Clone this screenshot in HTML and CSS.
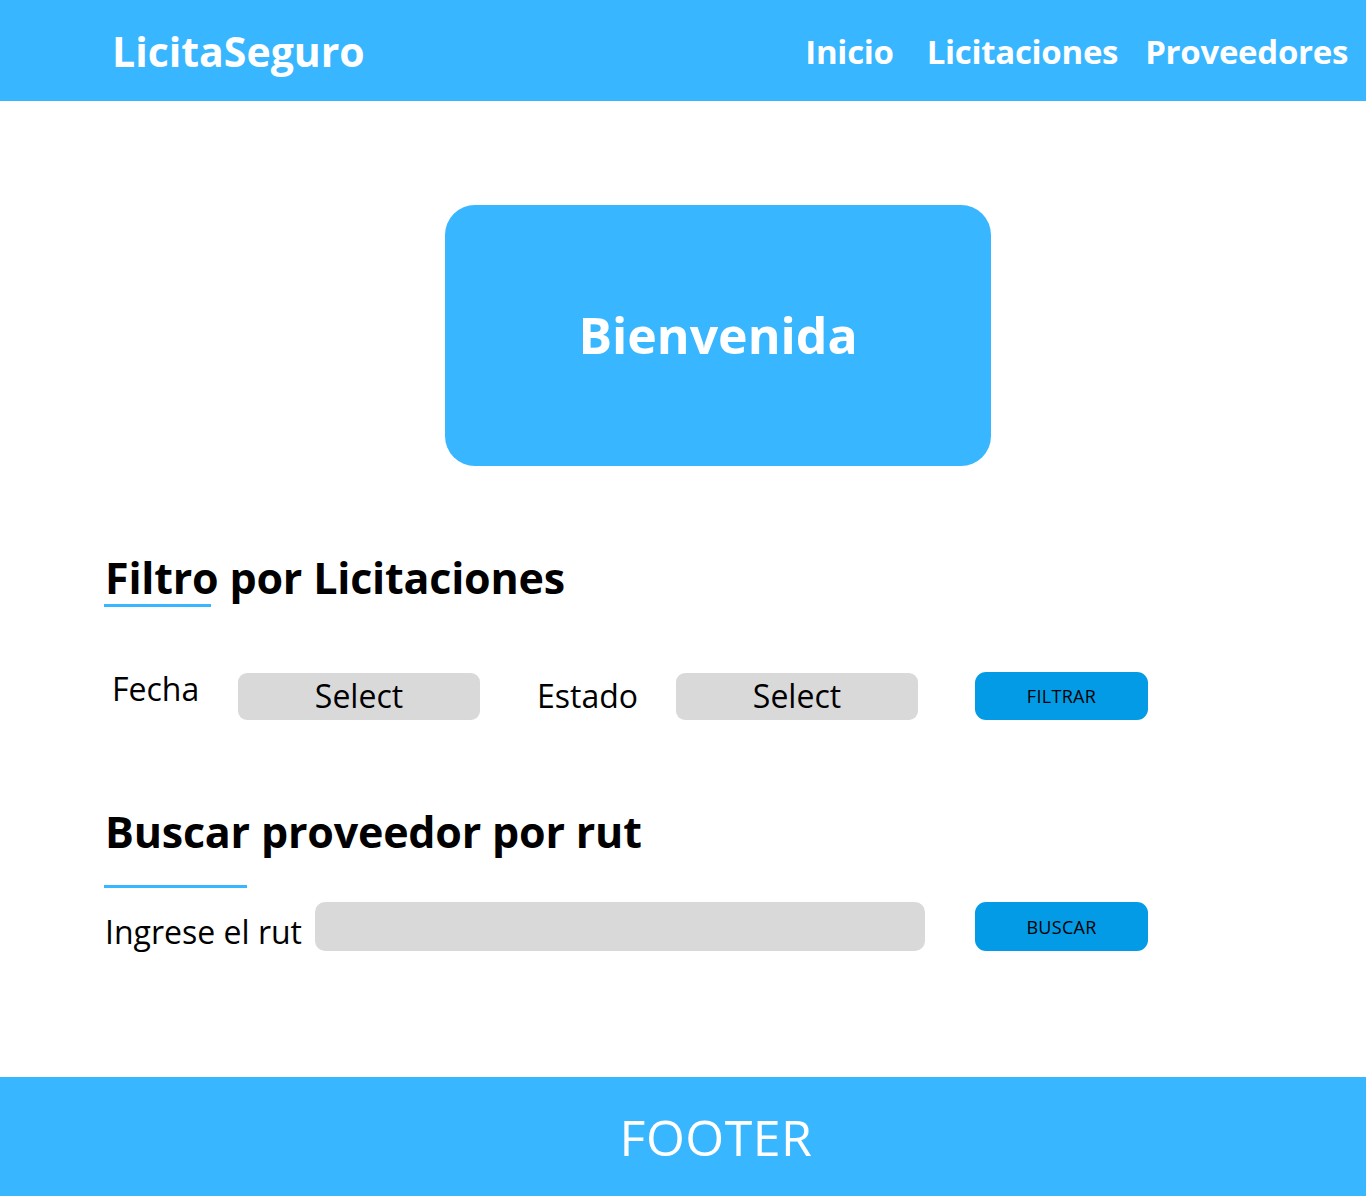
FILE: index.html
```html
<!DOCTYPE html>
<html lang="es">
<head>
<meta charset="utf-8">
<title>LicitaSeguro</title>
<link rel="stylesheet" href="styles.css">
</head>
<body>
<header class="topbar">
  <div class="logo">LicitaSeguro</div>
  <nav class="nav">
    <a class="nav-link first" href="#">Inicio</a>
    <a class="nav-link" href="#">Licitaciones</a>
    <a class="nav-link" href="#">Proveedores</a>
  </nav>
</header>
<main class="main">
  <div class="hero-wrap">
    <div class="hero">Bienvenida</div>
  </div>
  <section class="section filter">
    <h2 class="title">Filtro por Licitaciones</h2>
    <div class="underline u1"></div>
    <div class="filter-row">
      <span class="label fecha">Fecha</span>
      <div class="select">Select</div>
      <span class="label estado">Estado</span>
      <div class="select">Select</div>
      <button class="btn btn-filter">FILTRAR</button>
    </div>
  </section>
  <section class="section search">
    <h2 class="title">Buscar proveedor por rut</h2>
    <div class="underline u2"></div>
    <div class="search-row">
      <span class="label rut">Ingrese el rut</span>
      <div class="input"></div>
      <button class="btn btn-search">BUSCAR</button>
    </div>
  </section>
</main>
<footer class="footer">FOOTER</footer>
</body>
</html>
```
FILE: styles.css
```css
* { box-sizing: border-box; }
html, body { margin: 0; padding: 0; }
body {
  font-family: "Open Sans", "Noto Sans", sans-serif;
  background: #ffffff;
  color: #000;
  width: 1366px;
  height: 1196px;
  display: flex;
  flex-direction: column;
}
.topbar {
  height: 101px;
  flex: none;
  background: #38b6ff;
  display: flex;
  align-items: center;
  justify-content: space-between;
  padding: 0 18px 0 112px;
  color: #fff;
}
.logo {
  font-size: 41px;
  font-weight: 700;
  line-height: 1;
  margin-top: 1px;
}
.nav { display: flex; gap: 27px; margin-top: 1px; }
.nav-link {
  color: #fff;
  text-decoration: none;
  font-size: 33px;
  font-weight: 700;
  letter-spacing: -0.3px;
  line-height: 1;
}
.nav-link.first { margin-right: 6px; }
.main { flex: 1; }
.hero-wrap { display: flex; padding-top: 104px; padding-left: 445px; }
.hero {
  width: 546px;
  height: 261px;
  background: #38b6ff;
  border-radius: 30px;
  display: flex;
  align-items: center;
  justify-content: center;
  color: #fff;
  font-size: 50px;
  font-weight: 700;
  padding-bottom: 2px;
}
.section { padding-left: 105px; }
.title {
  margin: 0;
  font-size: 43px;
  font-weight: 700;
  line-height: 1;
  letter-spacing: -0.2px;
}
.filter { margin-top: 90px; }
.underline { height: 3px; background: #38b6ff; margin-left: -1px; }
.u1 { width: 107px; margin-top: 5px; }
.u2 { width: 143px; margin-top: 32px; }
.filter-row {
  display: flex;
  align-items: center;
  margin-top: 65px;
  height: 48px;
}
.label { font-size: 32px; line-height: 1; }
.fecha { margin-left: 7px; width: 126px; margin-top: -14px; }
.estado { margin-left: 57px; width: 139px; }
.select {
  width: 242px;
  height: 47px;
  background: #d9d9d9;
  border-radius: 9px;
  display: flex;
  align-items: center;
  justify-content: center;
  font-size: 32px;
  line-height: 1;
}
.btn {
  width: 173px;
  height: 48px;
  background: #039be5;
  border: none;
  border-radius: 11px;
  color: #000;
  font-family: inherit;
  font-size: 18px;
  letter-spacing: 0.3px;
  padding: 0;
}
.btn-filter { margin-left: 57px; }
.search { margin-top: 90px; }
.search-row {
  display: flex;
  align-items: center;
  margin-top: 14px;
  height: 49px;
}
.rut { width: 210px; margin-top: 10px; }
.input {
  width: 610px;
  height: 49px;
  background: #d9d9d9;
  border-radius: 10px;
}
.btn-search { margin-left: 50px; height: 49px; }
.footer {
  height: 119px;
  flex: none;
  background: #38b6ff;
  color: #fff;
  display: flex;
  align-items: center;
  justify-content: center;
  font-size: 50px;
  letter-spacing: 0.5px;
  padding-left: 66px;
}
```
